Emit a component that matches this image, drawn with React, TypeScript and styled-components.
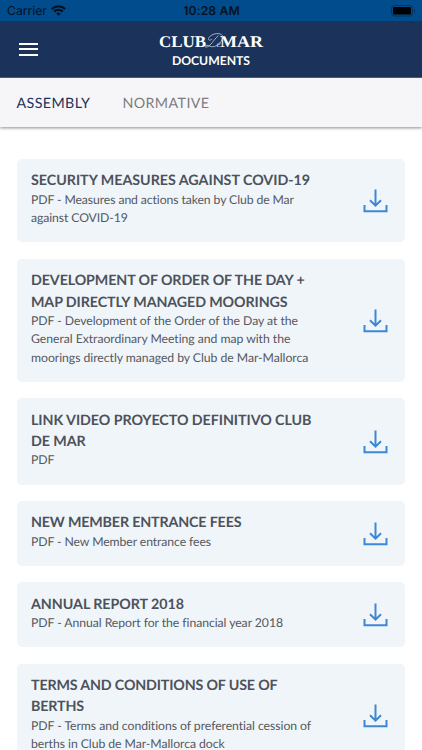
import React from "react";
import styled, { createGlobalStyle } from "styled-components";

const GlobalStyle = createGlobalStyle`
  * { box-sizing: border-box; }
  body { margin: 0; background: #fff; font-family: Lato, "Liberation Sans", sans-serif; text-rendering: geometricPrecision; }
`;

const Screen = styled.div`
  height: 750px;
  display: flex;
  flex-direction: column;
  overflow: hidden;
  background: #fff;
`;

const StatusBar = styled.div`
  flex: none;
  height: 21px;
  padding: 0 6px 0 7px;
  display: grid;
  grid-template-columns: 1fr auto 1fr;
  align-items: center;
  background: #004c8c;
  color: #041222;
  font: 400 12.2px/21px Inter, sans-serif;
`;

const Carrier = styled.div`
  display: flex;
  align-items: center;
  gap: 4px;
`;

const Clock = styled.div`
  font-weight: 600;
  letter-spacing: 0.1px;
`;

const BatterySlot = styled.div`
  display: flex;
  justify-content: flex-end;
`;

const AppBar = styled.header`
  flex: none;
  height: 57px;
  padding: 0 19px;
  display: grid;
  grid-template-columns: 1fr auto 1fr;
  align-items: center;
  background: #1b335b;
  border-bottom: 1px solid #4f6283;
`;

const MenuButton = styled.button`
  width: 20px;
  height: 13px;
  padding: 0;
  border: 0;
  background: none;
  display: flex;
  flex-direction: column;
  justify-content: space-between;
`;

const MenuLine = styled.span`
  width: 19px;
  height: 2px;
  background: #fff;
`;

const Brand = styled.div`
  padding-top: 2px;
  display: flex;
  flex-direction: column;
  align-items: center;
  color: #fff;
`;

const ScreenTitle = styled.h1`
  margin: 2px 0 0;
  font-size: 12.2px;
  font-weight: 700;
  line-height: 16px;
`;

const Tabs = styled.nav`
  flex: none;
  height: 49px;
  padding: 2px 16.5px 0;
  display: flex;
  align-items: center;
  gap: 32px;
  background: #f6f6f8;
  box-shadow: 0 1px 3px rgba(0, 0, 0, 0.45);
`;

const Tab = styled.a<{ $active?: boolean }>`
  font-size: 14.27px;
  line-height: 20px;
  letter-spacing: 0.4px;
  color: ${(p) => (p.$active ? "#1b335b" : "#7d7d7f")};
`;

const List = styled.main`
  padding: 32.2px 17px 0 16.5px;
  display: flex;
  flex-direction: column;
  gap: 16.4px;
`;

const Card = styled.article`
  flex: none;
  padding: 11.3px 17.5px 14.9px 14.5px;
  display: flex;
  align-items: center;
  justify-content: space-between;
  border-radius: 5px;
  background: #f0f5fa;
`;

const CardText = styled.div`
  width: 290px;
`;

const CardTitle = styled.h2<{ $tracking: number }>`
  margin: 0 0 -1px;
  font-size: 14.27px;
  font-weight: 700;
  line-height: 21.4px;
  letter-spacing: ${(p) => p.$tracking}px;
  color: #4d525a;
`;

const CardNote = styled.p<{ $tracking: number }>`
  margin: 0;
  font-size: 12.23px;
  line-height: 18.35px;
  letter-spacing: ${(p) => p.$tracking}px;
  color: #54585f;
`;

const Download = styled.svg`
  flex: none;
  display: block;
  margin-top: 4px;
`;

type Document = { title: string; note: string; titleTracking: number; noteTracking: number };

const documents: Document[] = [
  {
    title: "SECURITY MEASURES AGAINST COVID-19",
    note: "PDF - Measures and actions taken by Club de Mar against COVID-19",
    titleTracking: -0.02,
    noteTracking: -0.1,
  },
  {
    title: "DEVELOPMENT OF ORDER OF THE DAY + MAP DIRECTLY MANAGED MOORINGS",
    note: "PDF - Development of the Order of the Day at the General Extraordinary Meeting and map with the moorings directly managed by Club de Mar-Mallorca",
    titleTracking: -0.11,
    noteTracking: -0.04,
  },
  {
    title: "LINK VIDEO PROYECTO DEFINITIVO CLUB DE MAR",
    note: "PDF",
    titleTracking: -0.06,
    noteTracking: -0.06,
  },
  {
    title: "NEW MEMBER ENTRANCE FEES",
    note: "PDF - New Member entrance fees",
    titleTracking: -0.16,
    noteTracking: -0.09,
  },
  {
    title: "ANNUAL REPORT 2018",
    note: "PDF - Annual Report for the financial year 2018",
    titleTracking: -0.05,
    noteTracking: -0.06,
  },
  {
    title: "TERMS AND CONDITIONS OF USE OF BERTHS",
    note: "PDF - Terms and conditions of preferential cession of berths in Club de Mar-Mallorca dock",
    titleTracking: -0.16,
    noteTracking: -0.05,
  },
];

const DownloadIcon = () => (
  <Download width="25" height="24" viewBox="0 0 25 24" fill="none" stroke="#3d87d3" strokeWidth="2">
    <path d="M12.5 0.5V16.5M7 11.2l5.5 5.5 5.5-5.5M1.5 16v6.2h22V16" />
  </Download>
);

const WifiIcon = () => (
  <svg width="15" height="11" viewBox="0 0 15 11" fill="none" stroke="#041222" strokeWidth="2.3">
    <path d="M.8 4.1a9.6 9.6 0 0 1 13.4 0M3.2 6.7a6.2 6.2 0 0 1 8.6 0" />
    <path d="M7.5 10.8 5.2 8.5a3.3 3.3 0 0 1 4.6 0Z" fill="#041222" stroke="none" />
  </svg>
);

const BatteryIcon = () => (
  <svg width="25" height="12" viewBox="0 0 25 12">
    <rect x=".5" y=".5" width="21" height="10.5" rx="3" fill="none" stroke="#063058" />
    <rect x="2" y="2" width="18" height="7.5" rx="1.3" fill="#000" />
    <path d="M23 4v3.5q1.2-.5 1.2-1.75T23 4" fill="#063058" />
  </svg>
);

const Logo = () => (
  <svg width="106" height="19" viewBox="0 0 106 19" fill="#fff" fontFamily="Liberation Serif, serif">
    <text x="1" y="15" fontSize="16.3" fontWeight="700" textLength="47" lengthAdjust="spacingAndGlyphs">CLUB</text>
    <text x="62" y="15" fontSize="16.3" fontWeight="700" textLength="43" lengthAdjust="spacingAndGlyphs">MAR</text>
    <path
      d="M60.5 3.5C57 6 54 12 50.5 14.3c-2 1.2-4.5.8-3.2-.6 2.2-1.6 5 1.9 9 .9 5-1.6 9.5-7.6 8-11C62.5.2 54 1.2 51 5.5c-1.5 2.7 1 3.700 3 1.500"
      fill="none"
      stroke="#c9d3e2"
      strokeWidth=".75"
    />
    <text x="58.5" y="15" fontSize="9" fontStyle="italic" fill="#c9d3e2">e</text>
  </svg>
);

export default function App() {
  return (
    <>
      <GlobalStyle />
      <Screen>
        <StatusBar>
          <Carrier>Carrier <WifiIcon /></Carrier>
          <Clock>10:28 AM</Clock>
          <BatterySlot><BatteryIcon /></BatterySlot>
        </StatusBar>
        <AppBar>
          <MenuButton aria-label="Menu"><MenuLine /><MenuLine /><MenuLine /></MenuButton>
          <Brand>
            <Logo />
            <ScreenTitle>DOCUMENTS</ScreenTitle>
          </Brand>
        </AppBar>
        <Tabs>
          <Tab $active>ASSEMBLY</Tab>
          <Tab>NORMATIVE</Tab>
        </Tabs>
        <List>
          {documents.map((doc) => (
            <Card key={doc.title}>
              <CardText>
                <CardTitle $tracking={doc.titleTracking}>{doc.title}</CardTitle>
                <CardNote $tracking={doc.noteTracking}>{doc.note}</CardNote>
              </CardText>
              <DownloadIcon />
            </Card>
          ))}
        </List>
      </Screen>
    </>
  );
}
